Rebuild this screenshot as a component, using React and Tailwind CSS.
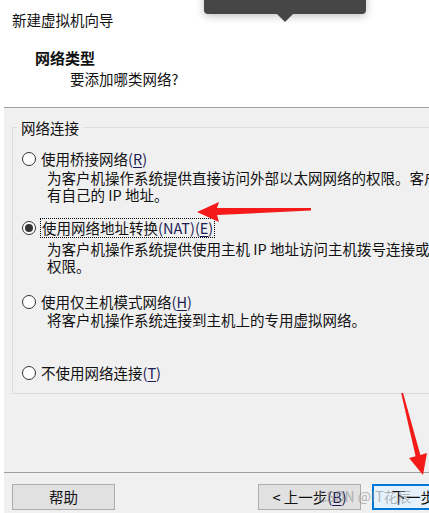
const FONT = "font-['Noto_Sans_CJK_SC','Noto_Sans',sans-serif]";

function Radio({ checked }) {
  return (
    <span className="flex h-[14px] w-[14px] shrink-0 items-center justify-center rounded-full border border-[#333333] bg-white">
      {checked && <span className="h-[8px] w-[8px] rounded-full bg-[#333333]" />}
    </span>
  );
}

function Key({ children }) {
  return (
    <span className="text-[#1c1c55]">
      (<span className="underline underline-offset-2">{children}</span>)
    </span>
  );
}

function Option({ checked, focused, label, className }) {
  return (
    <div className={`flex items-center pl-[9px] ${className}`}>
      <Radio checked={checked} />
      <span
        className={
          focused
            ? "ml-[4px] border border-dotted border-black px-[1px] py-[1px] leading-[16px]"
            : "ml-[5px] leading-[17px]"
        }
      >
        {label}
      </span>
    </div>
  );
}

function Desc({ children, className = "" }) {
  return (
    <p className={`whitespace-nowrap pl-[34px] leading-[17px] ${className}`}>{children}</p>
  );
}

function Button({ children, primary, className = "" }) {
  return (
    <button
      className={`flex h-[26px] w-[103px] shrink-0 items-center justify-center leading-none ${
        primary
          ? "border-2 border-[#0078d7] bg-[#e5f1fb]"
          : "border border-[#adadad] bg-[#e1e1e1]"
      } ${className}`}
    >
      {children}
    </button>
  );
}

function Arrows() {
  return (
    <svg
      className="pointer-events-none absolute left-0 top-0"
      width="429"
      height="513"
      viewBox="0 0 429 513"
    >
      <polygon
        fill="#f41a1a"
        points="197,212 219,202 217,208 311,208 311,210.5 217,215 219,222"
      />
      <polygon
        fill="#f41a1a"
        points="423,475 409,458 415.6,456.2 401.2,393.3 403,392.7 420.4,455 427,453"
      />
    </svg>
  );
}

export default function App() {
  return (
    <div
      className={`relative h-[513px] w-[429px] overflow-hidden bg-white text-[14.5px] text-[#111111] ${FONT}`}
    >
      <header className="h-[107px] pl-[12px] pt-[11px]">
        <h1 className="leading-[17px]">新建虚拟机向导</h1>
        <h2 className="mt-[21px] pl-[23px] text-[15px] font-bold leading-[17px]">网络类型</h2>
        <p className="mt-[4px] pl-[58px] leading-[17px]">要添加哪类网络?</p>
      </header>

      <div className="ml-1 flex h-[406px] w-[600px] flex-col border-t border-[#a0a0a0] bg-[#f0f0f0]">
        <fieldset className="ml-2 mt-[11px] w-[560px] border border-[#dcdcdc] pb-[12px]">
          <legend className="ml-[4px] px-[4px] leading-[17px]">网络连接</legend>

          <Option
            className="mt-[14px]"
            label={<>使用桥接网络<Key>R</Key></>}
          />
          <Desc className="mt-[2px]">
            为客户机操作系统提供直接访问外部以太网网络的权限。客户机在外部网络上必须
          </Desc>
          <Desc>有自己的 IP 地址。</Desc>

          <Option
            className="mt-[15px]"
            checked
            focused
            label={<>使用网络地址转换<span className="text-[#1c1c55]">(NAT)</span><Key>E</Key></>}
          />
          <Desc className="mt-[2px]">
            为客户机操作系统提供使用主机 IP 地址访问主机拨号连接或外部以太网网络连接的
          </Desc>
          <Desc>权限。</Desc>

          <Option
            className="mt-[19px]"
            label={<>使用仅主机模式网络<Key>H</Key></>}
          />
          <Desc className="mt-[1px]">将客户机操作系统连接到主机上的专用虚拟网络。</Desc>

          <Option
            className="mt-[36px]"
            label={<>不使用网络连接<Key>T</Key></>}
          />
        </fieldset>

        <footer className="mt-auto flex h-[41px] items-start border-t border-[#a0a0a0] pl-[8px] pt-[11px]">
          <Button>帮助</Button>
          <Button className="ml-[143px]">&lt; 上一步<Key>B</Key></Button>
          <Button primary className="ml-[11px]">下一步<Key>N</Key></Button>
        </footer>
      </div>

      <div className="absolute left-[204px] top-[-20px] h-[34px] w-[162px] overflow-hidden rounded-[4px] bg-[#464646] shadow-[0_2px_8px_rgba(0,0,0,0.25)]">
        <div className="mt-[4px] flex text-[14px] leading-[17px] text-white">
          <span className="ml-[16px]">截图</span>
          <span className="ml-[22px]">翻译</span>
          <span className="ml-[28px]">复制</span>
        </div>
      </div>
      <div className="absolute left-[277px] top-[14px] h-0 w-0 border-x-[8px] border-t-[8px] border-x-transparent border-t-[#464646]" />

      <span className="pointer-events-none absolute left-[318px] top-[488px] whitespace-nowrap text-[14px] leading-[17px] text-[#8a8a8a]/60">
        CSDN @IT花辰
      </span>

      <Arrows />
    </div>
  );
}
